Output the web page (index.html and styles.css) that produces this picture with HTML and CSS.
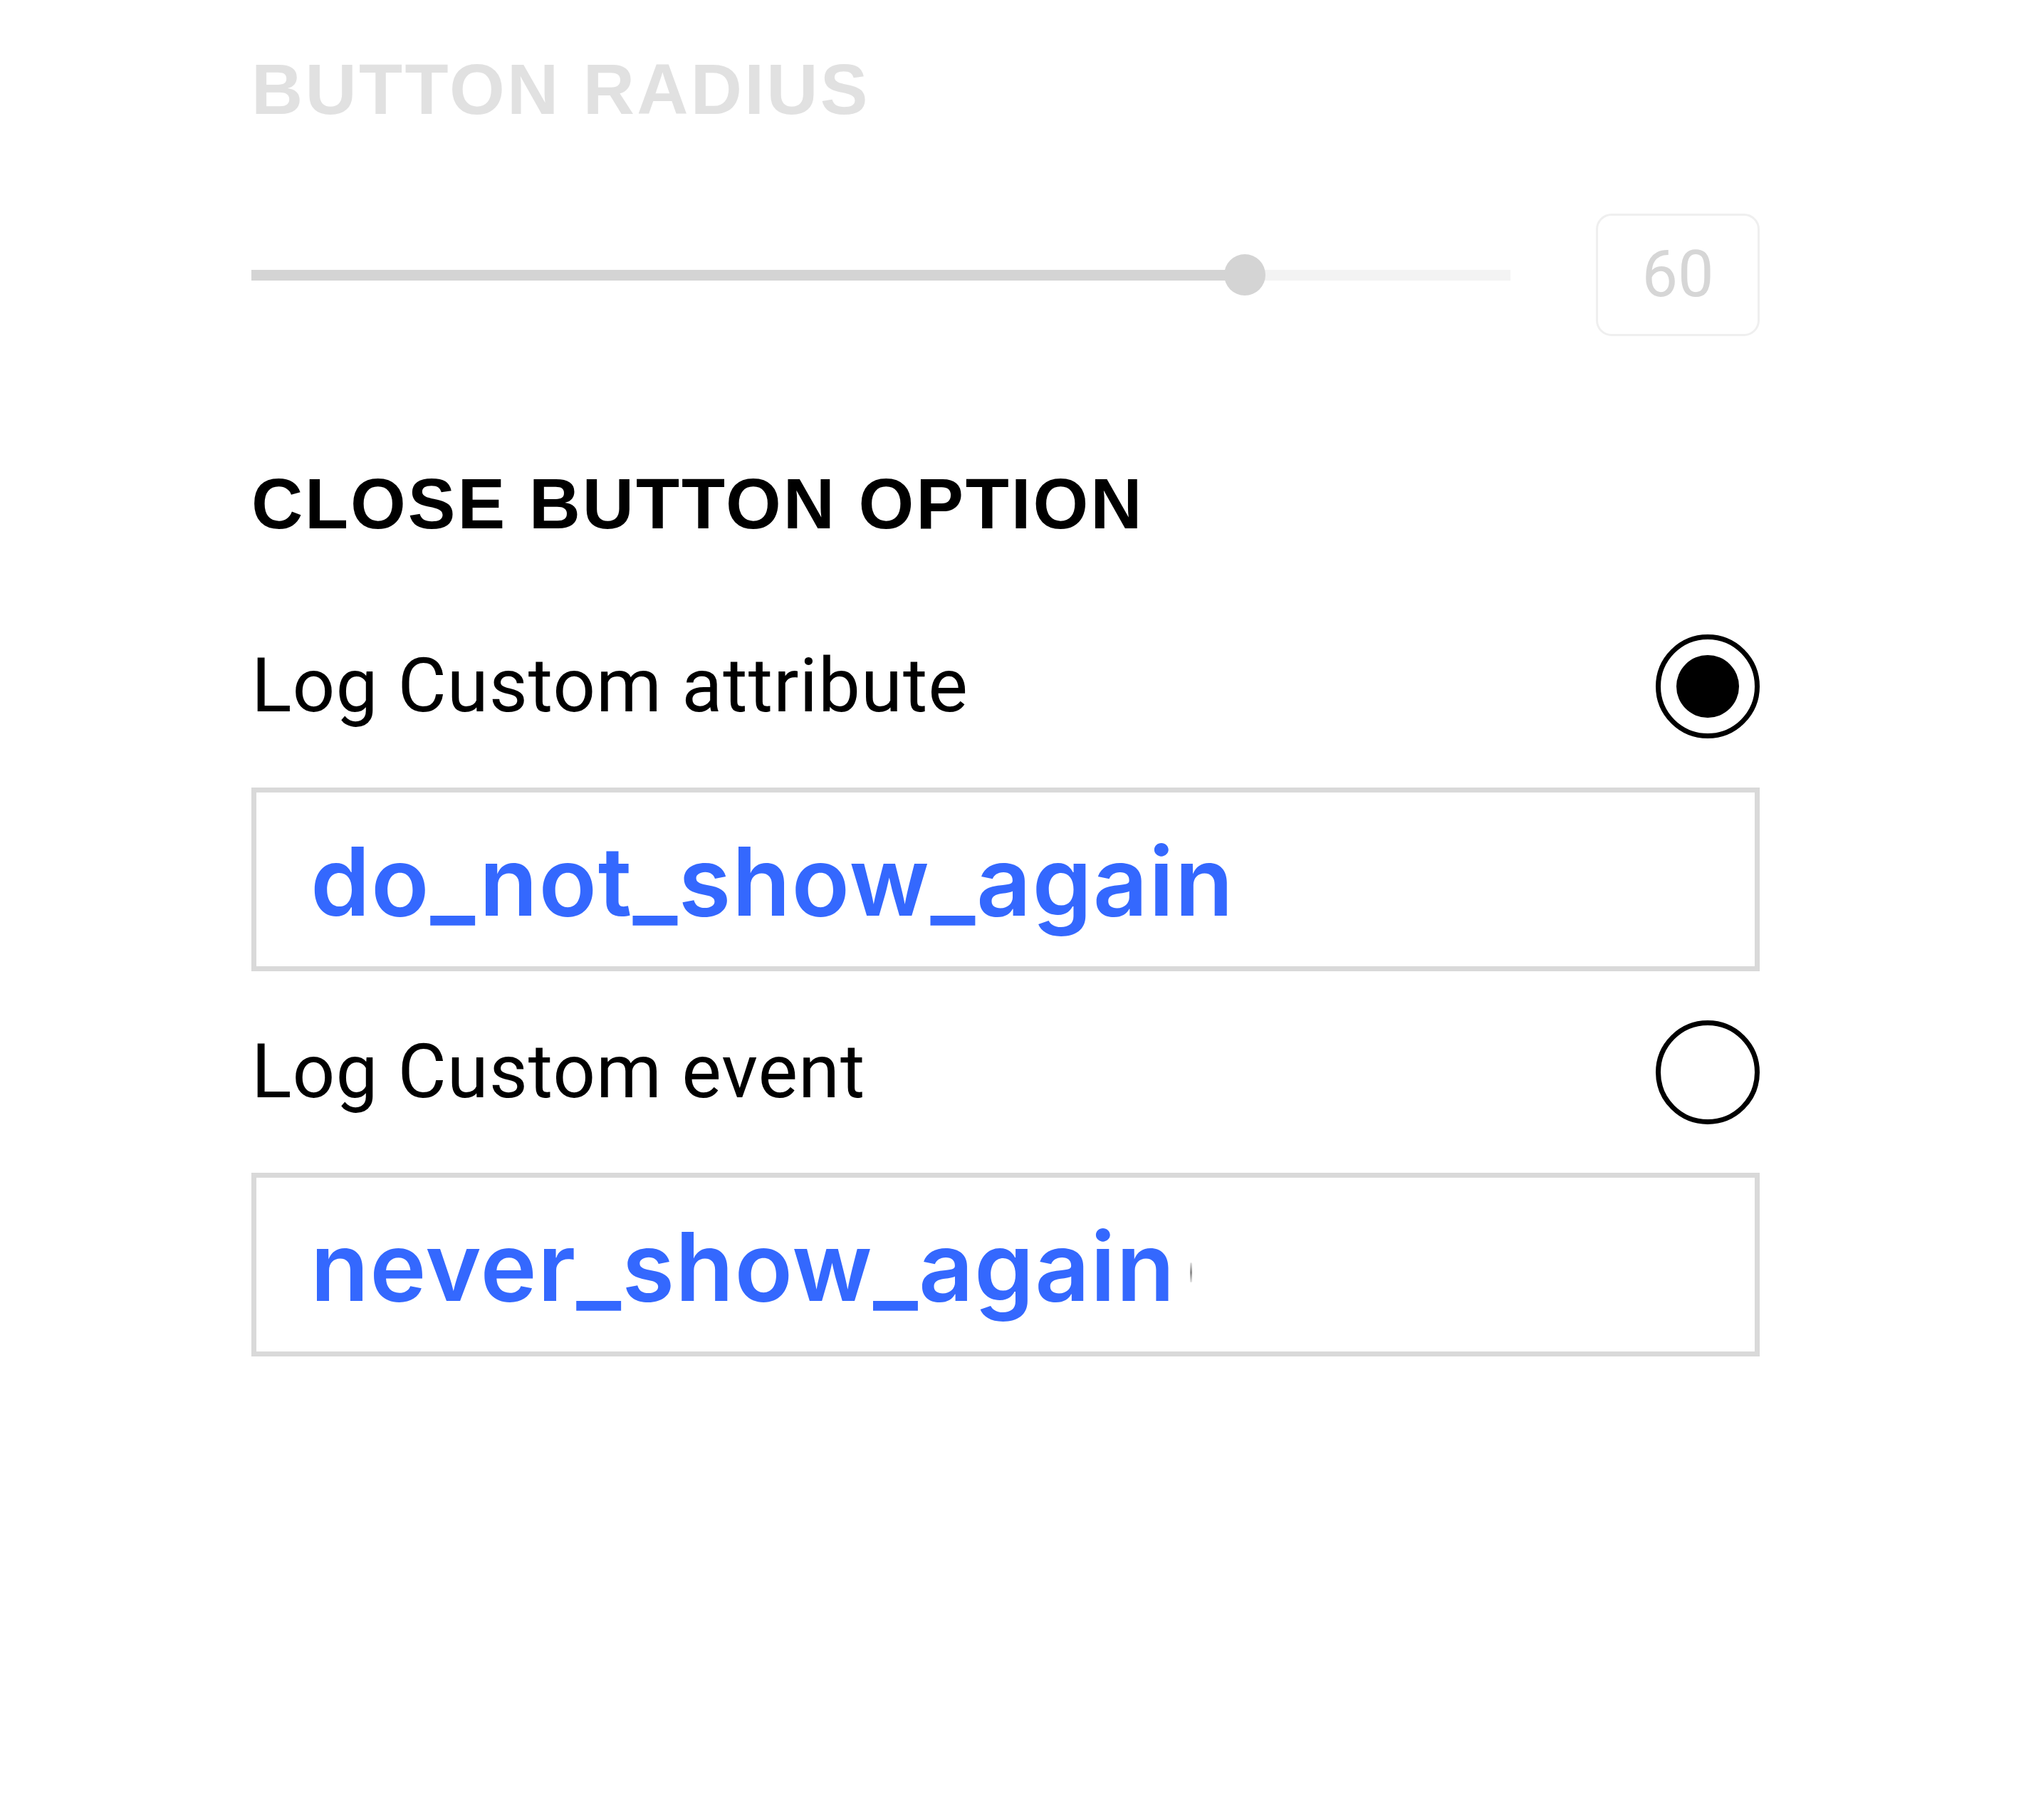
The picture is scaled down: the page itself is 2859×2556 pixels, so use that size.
FILE: index.html
```html
<!DOCTYPE html>
<html lang="en">
<head>
<meta charset="utf-8">
<title>Close button option</title>
<link rel="stylesheet" href="styles.css">
</head>
<body>
<main class="panel">
  <h2 class="section-title section-title--disabled">BUTTON RADIUS</h2>
  <div class="slider-row">
    <div class="slider">
      <div class="slider-fill" style="width: 78.9%"></div>
      <div class="slider-thumb" style="left: 78.9%"></div>
    </div>
    <div class="value-box">60</div>
  </div>

  <h2 class="section-title section-title--close">CLOSE BUTTON OPTION</h2>

  <div class="option-row">
    <span class="option-label">Log Custom attribute</span>
    <span class="radio radio--checked"><span class="radio-dot"></span></span>
  </div>
  <div class="text-field"><span class="field-value">do_not_show_again</span></div>

  <div class="option-row option-row--second">
    <span class="option-label">Log Custom event</span>
    <span class="radio"></span>
  </div>
  <div class="text-field text-field--second"><span class="field-value field-value--second">never_show_again</span><span class="caret-ghost"></span></div>
</main>
</body>
</html>
```

FILE: styles.css
```css
html, body {
  margin: 0;
  padding: 0;
  background: #ffffff;
}

.panel {
  width: 2118px;
  margin-left: 353px;
  padding-top: 76px;
  display: flex;
  flex-direction: column;
}

.section-title {
  margin: 0;
  font-family: "Liberation Sans", Arial, sans-serif;
  font-weight: 700;
  font-size: 100px;
  line-height: 99px;
  letter-spacing: 3.3px;
  white-space: nowrap;
}

.section-title--disabled {
  color: #e1e1e1;
}

.section-title--close {
  color: #000000;
  margin-top: 186px;
  letter-spacing: 2.9px;
}

.slider-row {
  margin-top: 125px;
  height: 172px;
  display: flex;
  align-items: center;
  gap: 120px;
}

.slider {
  position: relative;
  flex: 1;
  height: 15px;
  background: #f3f3f3;
}

.slider-fill {
  height: 100%;
  background: #d4d4d4;
}

.slider-thumb {
  position: absolute;
  top: 50%;
  width: 58px;
  height: 58px;
  margin-left: -29px;
  margin-top: -29px;
  border-radius: 50%;
  background: #d4d4d4;
}

.value-box {
  box-sizing: border-box;
  width: 230px;
  height: 172px;
  border: 3px solid #efefef;
  border-radius: 22px;
  display: flex;
  align-items: center;
  justify-content: center;
  font-family: Roboto, "Noto Sans", sans-serif;
  font-size: 90px;
  line-height: 90px;
  color: #d6d6d6;
}

.option-row {
  margin-top: 134px;
  height: 146px;
  display: flex;
  align-items: center;
  justify-content: space-between;
}

.option-row--second {
  margin-top: 69px;
}

.option-label {
  font-family: Roboto, "Noto Sans", sans-serif;
  font-size: 105px;
  line-height: 104px;
  letter-spacing: 1px;
  color: #000000;
  white-space: nowrap;
}

.radio {
  box-sizing: border-box;
  width: 146px;
  height: 146px;
  border: 7px solid #000000;
  border-radius: 50%;
  display: flex;
  align-items: center;
  justify-content: center;
}

.radio-dot {
  width: 88px;
  height: 88px;
  border-radius: 50%;
  background: #000000;
}

.text-field {
  box-sizing: border-box;
  margin-top: 69px;
  height: 258px;
  border: 7px solid #d9d9d9;
  padding: 57px 0 0 76px;
  display: flex;
  align-items: flex-start;
}

.text-field--second {
  margin-top: 68px;
}

.field-value {
  font-family: Inter, "Noto Sans", sans-serif;
  font-weight: 600;
  font-size: 134px;
  line-height: 134px;
  letter-spacing: 1.5px;
  color: #3468fe;
  white-space: nowrap;
}

.field-value--second {
  letter-spacing: 1.2px;
}

.caret-ghost {
  display: block;
  width: 3px;
  height: 28px;
  margin-left: 20px;
  margin-top: 62px;
  background: linear-gradient(to bottom, rgba(120,120,120,0.2), rgba(90,90,90,0.7), rgba(120,120,120,0.2));
  border-radius: 2px;
}
```
